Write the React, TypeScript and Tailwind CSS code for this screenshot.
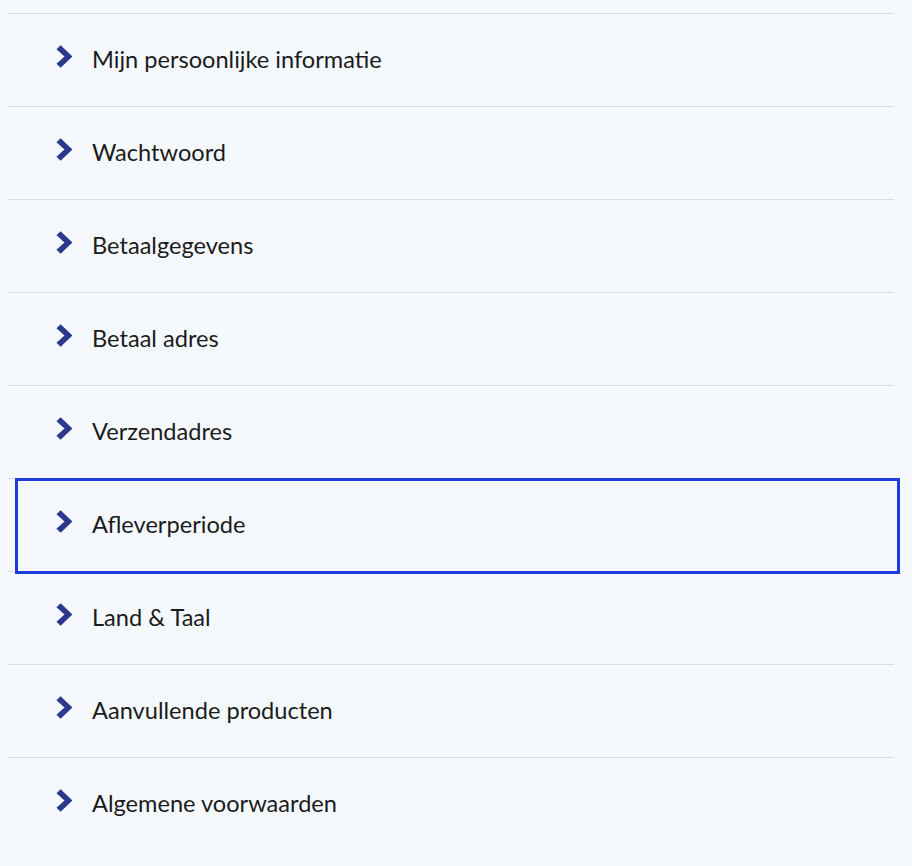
import { useState } from 'react';

const items = [
  'Mijn persoonlijke informatie',
  'Wachtwoord',
  'Betaalgegevens',
  'Betaal adres',
  'Verzendadres',
  'Afleverperiode',
  'Land & Taal',
  'Aanvullende producten',
  'Algemene voorwaarden',
];

function Chevron() {
  return (
    <svg width="17" height="23" viewBox="0 0 16 22" className="shrink-0">
      <polygon points="0.3,4 4.3,0.2 15.6,11 4.3,21.8 0.3,18 8,11" fill="#2b3a8f" />
    </svg>
  );
}

export default function App() {
  const [focused] = useState(5);

  return (
    <div className="min-h-[866px] bg-[#f5f9fe] pt-[13px]" style={{ fontFamily: 'Lato, "Noto Sans", sans-serif' }}>
      <div className="ml-2 w-[886px]">
        {items.map((label, i) => (
          <div key={label} className="relative h-[93px] border-t border-[#d9dde3]">
            <button className="flex h-full w-full items-center gap-[19px] pl-[48px] text-left outline-none">
              <span className="-mt-[8px] flex"><Chevron /></span>
              <span className="text-[23.6px] leading-none text-[#1b1b1b]">{label}</span>
            </button>
            {i === focused && (
              <span className="pointer-events-none absolute top-[-1px] bottom-[-3px] left-[7px] right-[-6px] z-10 border-solid border-3 border-[#1e3cdc]" />
            )}
          </div>
        ))}
      </div>
    </div>
  );
}
